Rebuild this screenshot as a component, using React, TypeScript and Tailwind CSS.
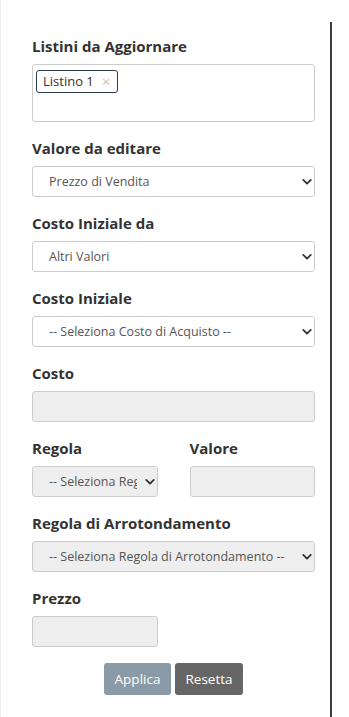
import React from 'react';

const font = { fontFamily: '"Open Sans", "Liberation Sans", sans-serif' };

const Chevron: React.FC = () => (
  <svg viewBox="0 0 12 8" className="absolute right-[2px] top-1/2 h-[7px] w-[10px] -translate-y-1/2" aria-hidden>
    <path d="M1.5 1.5 L6 6 L10.5 1.5" fill="none" stroke="#333" strokeWidth="2.2" strokeLinecap="round" strokeLinejoin="round" />
  </svg>
);

interface SelectProps {
  value: string;
  disabled?: boolean;
}

const FakeSelect: React.FC<SelectProps> = ({ value, disabled }) => (
  <div
    className={`relative h-[31px] w-full overflow-hidden rounded-[3px] border border-[#ccc] pl-4 pr-[20px] text-[12.5px] leading-[29px] text-[#555] whitespace-nowrap ${
      disabled ? 'bg-[#eee]' : 'bg-white'
    }`}
  >
    <span className="block overflow-hidden">{value}</span>
    <div className={`absolute right-0 top-0 h-full w-[20px] ${disabled ? 'bg-[#eee]' : 'bg-white'}`}>
      <Chevron />
    </div>
  </div>
);

const FakeInput: React.FC = () => (
  <div className="h-[31px] w-full rounded-[3px] border border-[#ccc] bg-[#eee]" />
);

const Label: React.FC<{ children: React.ReactNode }> = ({ children }) => (
  <div className="mb-[7px] text-[15px] font-bold leading-[21px] text-[#333]">{children}</div>
);

export default function App() {
  return (
    <div className="flex h-[717px] w-[349px] border-l border-[#eee] bg-white pt-[22px]" style={font}>
      <div className="flex w-[331px] flex-col border-r-[2px] border-[#343a40] pl-[31px] pr-[15px] pt-[14px]">
        {/* Listini */}
        <Label>Listini da Aggiornare</Label>
        <div className="mb-4 h-[58px] rounded-[3px] border border-[#ccc] bg-white p-[3px]">
          <span className="inline-flex h-[23px] items-center rounded-[3px] border border-[#2c3e50] pl-[6px] pr-[7px] text-[13px] text-[#333]">
            Listino 1
            <span className="ml-[8px] text-[15px] leading-none text-[#c4c4c4]">×</span>
          </span>
        </div>

        <Label>Valore da editare</Label>
        <div className="mb-4">
          <FakeSelect value="Prezzo di Vendita" />
        </div>

        <Label>Costo Iniziale da</Label>
        <div className="mb-4">
          <FakeSelect value="Altri Valori" />
        </div>

        <Label>Costo Iniziale</Label>
        <div className="mb-4">
          <FakeSelect value="-- Seleziona Costo di Acquisto --" />
        </div>

        <Label>Costo</Label>
        <div className="mb-4">
          <FakeInput />
        </div>

        {/* Regola / Valore */}
        <div className="mb-4 grid grid-cols-2 gap-x-8">
          <div>
            <Label>Regola</Label>
            <FakeSelect value="-- Seleziona Regola --" disabled />
          </div>
          <div>
            <Label>Valore</Label>
            <FakeInput />
          </div>
        </div>

        <Label>Regola di Arrotondamento</Label>
        <div className="mb-4">
          <FakeSelect value="-- Seleziona Regola di Arrotondamento --" disabled />
        </div>

        <Label>Prezzo</Label>
        <div className="grid grid-cols-2 gap-x-8">
          <FakeInput />
        </div>

        {/* Actions */}
        <div className="mt-4 flex justify-center gap-1">
          <button className="h-[32px] w-[67px] rounded-[3px] bg-[#8a9aa6] text-[13.5px] text-white">Applica</button>
          <button className="h-[32px] w-[68px] rounded-[3px] bg-[#666] text-[13.5px] text-white">Resetta</button>
        </div>
      </div>
    </div>
  );
}
